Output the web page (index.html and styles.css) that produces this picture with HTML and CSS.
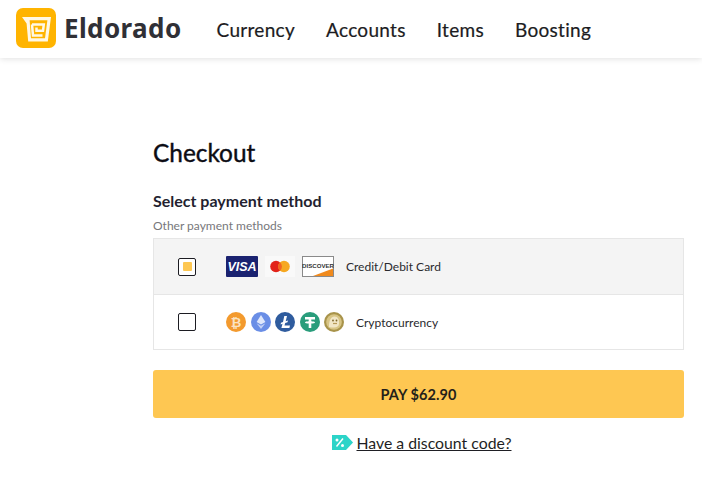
FILE: index.html
```html
<!DOCTYPE html>
<html lang="en">
<head>
    <meta charset="UTF-8">
    <title>Eldorado - Checkout</title>
    <link rel="stylesheet" href="styles.css">
</head>
<body>

    <div class="header">
        <div class="brand">
            <svg class="logo" width="40" height="40" viewBox="0 0 40 40">
                <rect width="40" height="40" rx="7" fill="#ffb400"/>
                <path d="M6 9H35L31.8 33.5H12.2L10.6 15.5z" fill="#fff8e6"/>
                <path d="M13.6 12.2H31.4L29 30.3H15z" fill="#ffb400"/>
                <path d="M16 16.5H27.8L27 22.8H20.5V19.6M16 16.5L17 27.4H26.5" fill="none" stroke="#fff8e6" stroke-width="2.5"/>
            </svg>
            <span class="brand-name">Eldorado</span>
        </div>
        <div class="nav">
            <a class="nav-link">Currency</a>
            <a class="nav-link">Accounts</a>
            <a class="nav-link">Items</a>
            <a class="nav-link">Boosting</a>
        </div>
    </div>

    <div class="content">
        <h1 class="page-title">Checkout</h1>
        <h2 class="section-title">Select payment method</h2>
        <div class="section-note">Other payment methods</div>

        <div class="methods">
            <div class="method selected">
                <span class="check"><span class="check-dot"></span></span>
                <div class="method-icons cards">
                    <svg width="32" height="21" viewBox="0 0 32 21">
                        <rect width="32" height="21" rx="1" fill="#1a2270"/>
                        <text x="16" y="15" text-anchor="middle" class="visa-text">VISA</text>
                    </svg>
                    <svg width="30" height="21" viewBox="0 0 30 21">
                        <rect width="30" height="21" fill="#f9f9f9"/>
                        <circle cx="11" cy="10.5" r="5.8" fill="#e2231a"/>
                        <circle cx="19" cy="10.5" r="5.8" fill="#f6a821"/>
                        <path d="M15 6.2a5.8 5.8 0 0 1 0 8.6a5.8 5.8 0 0 1 0-8.6z" fill="#f26522"/>
                    </svg>
                    <svg width="32" height="21" viewBox="0 0 32 21">
                        <rect x="0.5" y="0.5" width="31" height="20" fill="#fff" stroke="#8a8a8a"/>
                        <path d="M11 20L31 12.5V20z" fill="#f08a1d"/>
                        <text x="16" y="12" text-anchor="middle" class="discover-text">DISCOVER</text>
                    </svg>
                </div>
                <span class="method-name">Credit/Debit Card</span>
            </div>
            <div class="method">
                <span class="check"></span>
                <div class="method-icons coins">
                    <svg width="20" height="20" viewBox="0 0 20 20">
                        <circle cx="10" cy="10" r="10" fill="#f39a2e"/>
                        <text x="10" y="14.5" text-anchor="middle" class="coin-text">&#8383;</text>
                    </svg>
                    <svg width="20" height="20" viewBox="0 0 20 20">
                        <circle cx="10" cy="10" r="10" fill="#6a8ee6"/>
                        <path d="M10 3L14.4 10L10 12.6L5.6 10z" fill="#dfe7fb"/>
                        <path d="M10 13.8L14.4 11.2L10 17L5.6 11.2z" fill="#c3d1f6"/>
                    </svg>
                    <svg width="20" height="20" viewBox="0 0 20 20">
                        <circle cx="10" cy="10" r="10" fill="#2f5c9e"/>
                        <path d="M9.3 4H12L10.7 9.2L13 8.4L12.5 10.2L10.2 11L9.5 13.6H15L14.4 16H6.4L7.5 11.8L5.6 12.5L6 10.8L8 10z" fill="#fff"/>
                    </svg>
                    <svg width="20" height="20" viewBox="0 0 20 20">
                        <circle cx="10" cy="10" r="10" fill="#2a9d7c"/>
                        <path d="M5 5H15V7.6H11.3V9.3C13.3 9.4 15 9.8 15 10.4C15 11 13.3 11.4 11.3 11.5V16H8.7V11.5C6.7 11.4 5 11 5 10.4C5 9.8 6.7 9.4 8.7 9.3V7.6H5z" fill="#fff"/>
                    </svg>
                    <svg width="20" height="20" viewBox="0 0 20 20">
                        <circle cx="10" cy="10" r="10" fill="#a8934a"/>
                        <circle cx="10" cy="10" r="7.8" fill="#d8c585"/>
                        <path d="M5 15C5 8 7 4.5 10.5 4.5C14 4.5 15.5 8 15 12C14.8 14 13 15.5 10 15.5C8 15.5 6 15.5 5 15z" fill="#f1e6c6"/>
                        <circle cx="9" cy="8.5" r="0.9" fill="#7d6628"/>
                        <circle cx="12.5" cy="8.5" r="0.9" fill="#7d6628"/>
                        <path d="M9 11.5H13" stroke="#b89a58" stroke-width="1.2"/>
                    </svg>
                </div>
                <span class="method-name">Cryptocurrency</span>
            </div>
        </div>

        <button class="pay-button">PAY $62.90</button>

        <div class="discount">
            <svg width="21" height="15" viewBox="0 0 21 15">
                <path d="M0 0H14L21 7.5L14 15H0z" fill="#2cd4c8"/>
                <path d="M4.5 11.5L11 3.5" stroke="#fff" stroke-width="1.5"/>
                <circle cx="5" cy="5" r="1.5" fill="#fff"/>
                <circle cx="10.5" cy="10.5" r="1.5" fill="#fff"/>
            </svg>
            <a class="discount-link">Have a discount code?</a>
        </div>
    </div>

</body>
</html>
```

FILE: styles.css
```css
body {
    font-family: "Lato", sans-serif;
    background-color: #ffffff;
    color: #1f1f24;
    margin: 0;
    padding: 0;
}

.header {
    display: flex;
    align-items: center;
    height: 58px;
    padding: 0 16px;
    background-color: #ffffff;
    box-shadow: 0 1px 6px rgba(0, 0, 0, 0.12);
}

.brand {
    display: flex;
    align-items: center;
    gap: 8px;
    margin-top: -3px;
}

.brand-name {
    font-family: "Noto Sans", sans-serif;
    font-weight: 700;
    font-size: 26px;
    letter-spacing: 0.4px;
    color: #303036;
}

.nav {
    display: flex;
    gap: 31px;
    margin-left: 35px;
}

.nav-link {
    font-size: 19px;
    letter-spacing: 0.3px;
    color: #1c1c22;
    -webkit-text-stroke: 0.2px #1c1c22;
}

.content {
    display: flex;
    flex-direction: column;
    width: 531px;
    margin-left: 153px;
    padding-top: 79px;
}

.page-title {
    font-size: 24.4px;
    font-weight: 400;
    line-height: 32px;
    margin: 0;
    color: #0c0c14;
    -webkit-text-stroke: 0.4px #0c0c14;
}

.section-title {
    font-size: 16px;
    font-weight: 700;
    line-height: 20px;
    margin: 22px 0 0;
    color: #241f30;
}

.section-note {
    font-size: 12px;
    line-height: 16px;
    margin-top: 7px;
    color: #77777b;
}

.methods {
    margin-top: 4px;
    border: 1px solid #e6e6e6;
}

.method {
    display: flex;
    align-items: center;
    height: 54px;
    padding-left: 24px;
}

.method.selected {
    height: 55px;
    background-color: #f4f4f4;
    border-bottom: 1px solid #e6e6e6;
}

.check {
    display: flex;
    align-items: center;
    justify-content: center;
    box-sizing: border-box;
    width: 18px;
    height: 18px;
    border: 1.5px solid #1c1c22;
    border-radius: 2px;
    background-color: #ffffff;
}

.check-dot {
    width: 9px;
    height: 9px;
    border-radius: 1px;
    background-color: #fdc752;
}

.method-icons {
    display: flex;
    align-items: center;
    margin-left: 30px;
}

.method-icons svg {
    display: block;
}

.cards {
    gap: 7px;
}

.coins {
    gap: 4.5px;
}

.method-name {
    font-size: 12px;
    color: #2a2a2e;
    margin-left: 12px;
}

.visa-text {
    font-family: "Liberation Sans", sans-serif;
    font-size: 12.5px;
    font-weight: 700;
    font-style: italic;
    fill: #ffffff;
}

.discover-text {
    font-family: "Liberation Sans", sans-serif;
    font-size: 6.1px;
    font-weight: 700;
    fill: #333333;
}

.coin-text {
    font-family: "DejaVu Sans", sans-serif;
    font-size: 13px;
    font-weight: 700;
    fill: #fbe3c2;
}

.pay-button {
    height: 48px;
    margin-top: 20px;
    border: none;
    border-radius: 3px;
    background-color: #fec752;
    font-family: "Lato", sans-serif;
    font-size: 14.5px;
    font-weight: 700;
    letter-spacing: 0.1px;
    color: #241f1a;
}

.discount {
    display: flex;
    justify-content: center;
    align-items: center;
    gap: 4px;
    margin-top: 15px;
    margin-left: 6px;
}

.discount-link {
    font-size: 15.8px;
    color: #1f1f24;
    text-decoration: underline;
}
```
